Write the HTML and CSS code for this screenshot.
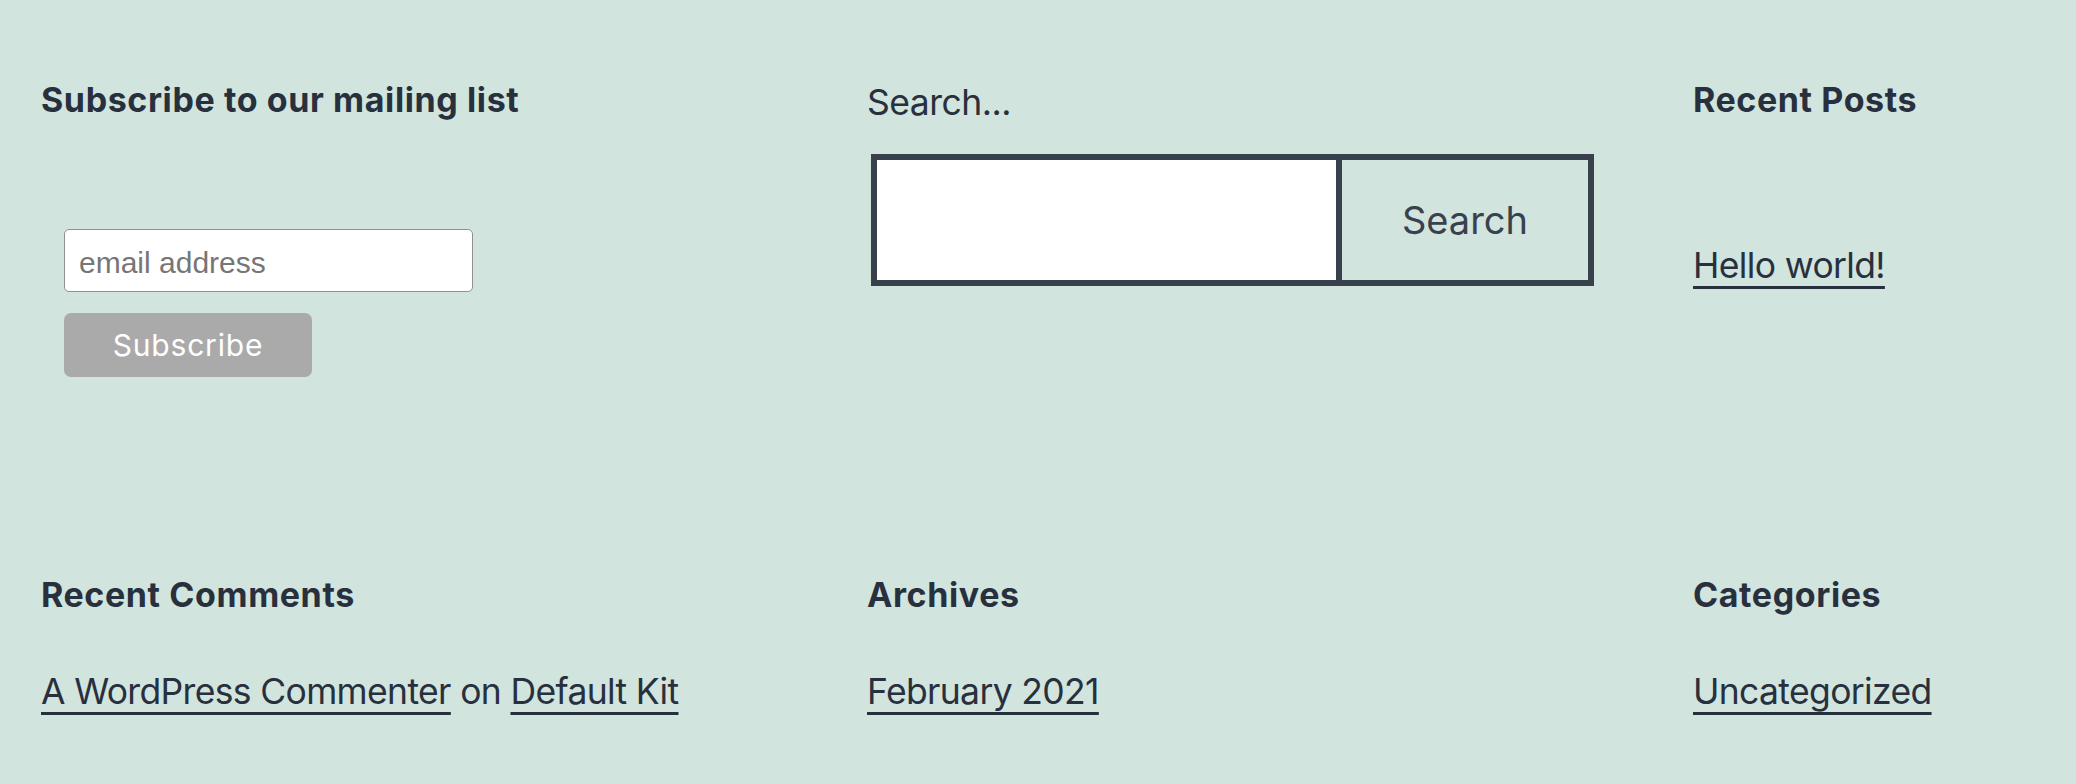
FILE: index.html
```html
<!DOCTYPE html>
<html lang="en">
<head>
<meta charset="utf-8">
<title>Footer widgets</title>
<link rel="stylesheet" href="styles.css">
</head>
<body>
<footer class="widget-area">
  <section class="widget">
    <h2 class="widget-title">Subscribe to our mailing list</h2>
    <form class="subscribe-form">
      <input class="email-input" type="email" placeholder="email address">
      <button class="subscribe-btn" type="button">Subscribe</button>
    </form>
  </section>
  <section class="widget">
    <label class="search-label" for="s">Search...</label>
    <form class="search-form">
      <input class="search-field" id="s" type="search">
      <button class="search-submit" type="button">Search</button>
    </form>
  </section>
  <section class="widget">
    <h2 class="widget-title">Recent Posts</h2>
    <ul class="link-list list-gap">
      <li><a href="#">Hello world!</a></li>
    </ul>
  </section>
  <section class="widget">
    <h2 class="widget-title">Recent Comments</h2>
    <ul class="link-list">
      <li><a href="#">A WordPress Commenter</a> on <a href="#">Default Kit</a></li>
    </ul>
  </section>
  <section class="widget">
    <h2 class="widget-title">Archives</h2>
    <ul class="link-list">
      <li><a href="#">February 2021</a></li>
    </ul>
  </section>
  <section class="widget">
    <h2 class="widget-title">Categories</h2>
    <ul class="link-list">
      <li><a href="#">Uncategorized</a></li>
    </ul>
  </section>
</footer>
</body>
</html>
```

FILE: styles.css
```css
html, body {
  margin: 0;
  padding: 0;
}

body {
  background: #d1e4dd;
  color: #28303d;
  font-family: Inter, "Noto Sans", sans-serif;
  width: 2076px;
  height: 784px;
  overflow: hidden;
}

.widget-area {
  display: grid;
  grid-template-columns: 780px 780px 1fr;
  column-gap: 46px;
  row-gap: 197px;
  align-items: start;
  padding: 79px 0 0 41px;
}

.widget {
  min-width: 0;
}

.widget-title {
  margin: 0;
  font-size: 34px;
  line-height: 42px;
  font-weight: 700;
  letter-spacing: 0.6px;
  color: #28303d;
}

/* mailing list */
.subscribe-form {
  display: flex;
  flex-direction: column;
  align-items: flex-start;
  gap: 21px;
  margin: 108px 0 0 23px;
}

.email-input {
  box-sizing: border-box;
  width: 409px;
  height: 63px;
  margin: 0;
  padding: 4px 14px 0;
  border: 1.5px solid #909090;
  border-radius: 5px;
  background: #fff;
  font-family: "Liberation Sans", Arial, sans-serif;
  font-size: 30px;
  color: #333;
}

.email-input::placeholder {
  color: #767676;
}

.subscribe-btn {
  box-sizing: border-box;
  width: 248px;
  height: 64px;
  margin: 0;
  padding: 0;
  border: 0;
  border-radius: 7px;
  background: #aaaaaa;
  color: #ffffff;
  font-family: Inter, "Noto Sans", sans-serif;
  font-size: 30px;
  letter-spacing: 0.8px;
}

/* search */
.search-label {
  display: block;
  font-size: 35.5px;
  letter-spacing: -0.5px;
  line-height: 47px;
  color: #28303d;
}

.search-form {
  display: flex;
  margin: 28px 0 0 4px;
}

.search-field {
  box-sizing: border-box;
  width: 471px;
  height: 132px;
  margin: 0;
  border: 6px solid #39414d;
  background: #fff;
  border-radius: 0;
  outline: none;
}

.search-submit {
  box-sizing: border-box;
  width: 252px;
  height: 132px;
  margin: 0;
  padding: 0;
  border: 6px solid #39414d;
  border-left: 0;
  background: transparent;
  color: #39414d;
  font-family: Inter, "Noto Sans", sans-serif;
  font-size: 38px;
}

/* lists */
.link-list {
  list-style: none;
  margin: 52px 0 0;
  padding: 0;
  font-size: 35.5px;
  letter-spacing: -0.65px;
  line-height: 48px;
  color: #28303d;
}

.link-list.list-gap {
  margin-top: 121px;
}

.link-list a {
  color: #28303d;
  text-decoration: underline;
  text-decoration-thickness: 2.5px;
  text-decoration-skip-ink: none;
  text-underline-offset: 8px;
}
```
